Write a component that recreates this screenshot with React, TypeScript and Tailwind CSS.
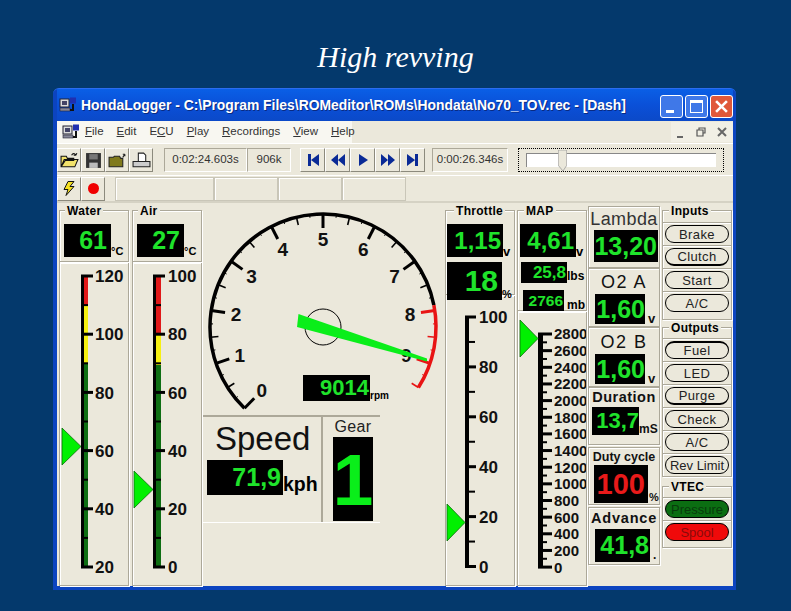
import React from "react";

const GREEN = "#1fe32b";
const etched = "border border-[#aca899] shadow-[1px_1px_0_#fff,inset_1px_1px_0_#fff]";

const Readout: React.FC<{ text: string; cls: string; color?: string }> = ({ text, cls, color = GREEN }) => (
  <div className={`flex items-center justify-end bg-black font-bold leading-none ${cls}`} style={{ color }}>
    {text}
  </div>
);

const Group: React.FC<{ label: string; cls: string; lx?: string; children: React.ReactNode }> = ({ label, cls, lx = "left-[6px]", children }) => (
  <div className={`relative ${etched} ${cls}`}>
    <span className={`absolute top-[-6px] ${lx} bg-[#ebe8db] px-[2px] text-[12px] leading-[13px] font-bold tracking-[0.3px]`}>{label}</span>
    {children}
  </div>
);

type Seg = { from: number; to: number; fill: string };

const Scale: React.FC<{
  box: string;
  cls: string;
  barX: number;
  barW: number;
  colorW?: number;
  y0: number;
  step: number;
  labels: string[];
  segs?: Seg[];
  ptr: number[];
  tick: number;
  minor: number;
  size: number;
  lx: number;
}> = ({ box, cls, barX, barW, colorW = 0, y0, step, labels, segs = [], ptr, tick, minor, size, lx }) => {
  const right = barX + barW;
  return (
    <svg viewBox={box} className={cls}>
      {segs.map((s) => (
        <rect key={s.from} x={right} y={s.from} width={colorW} height={s.to - s.from} fill={s.fill} />
      ))}
      <rect x={barX} y={y0 - 1.5} width={barW} height={step * (labels.length - 1) + 3} fill="#000" />
      {labels.map((l, i) => {
        const y = y0 + i * step;
        return (
          <g key={l}>
            <rect x={right} y={y - 1.5} width={tick} height={3} fill="#000" />
            {i < labels.length - 1 && <rect x={right} y={y + step / 2 - 1} width={minor} height={2} fill="#000" />}
            <text x={lx} y={y + size * 0.36} fontSize={size} fontWeight="bold" fill="#111">
              {l}
            </text>
          </g>
        );
      })}
      <polygon points={`${ptr[0]},${ptr[1]} ${ptr[0]},${ptr[1] + 37} ${barX},${ptr[1] + 18.5}`} fill="#00f000" stroke="#0a6a0a" strokeWidth="0.8" />
    </svg>
  );
};

const pt = (r: number, v: number) => {
  const a = ((-136 + 27.2 * v) * Math.PI) / 180;
  return [323 + r * Math.sin(a), 327 - r * Math.cos(a)];
};

const arc = (a: number, b: number) => {
  const [x1, y1] = pt(113, a);
  const [x2, y2] = pt(113, b);
  return `M${x1} ${y1} A113 113 0 ${(b - a) * 27.2 > 180 ? 1 : 0} 1 ${x2} ${y2}`;
};

const Tach: React.FC = () => {
  const ticks: number[] = [];
  for (let i = 0; i <= 38; i++) ticks.push(i / 4);
  return (
    <svg viewBox="203 203 240 212" className="w-[240px] h-[212px]">
      <path d={arc(0, 7.9)} fill="none" stroke="#000" strokeWidth="3.5" />
      <path d={arc(7.9, 9.5)} fill="none" stroke="#e81414" strokeWidth="3.5" />
      {ticks.map((v) => {
        const major = v % 1 === 0;
        const mid = v % 0.5 === 0;
        const len = major ? 14 : mid ? 8 : 3;
        const [x1, y1] = pt(113, v);
        const [x2, y2] = pt(113 - len, v);
        return (
          <line key={v} x1={x1} y1={y1} x2={x2} y2={y2} stroke={v >= 7.9 ? "#e81414" : "#000"} strokeWidth={major ? 3 : mid ? 1.6 : 1} />
        );
      })}
      {[0, 1, 2, 3, 4, 5, 6, 7, 8, 9].map((n) => {
        const [x, y] = pt(88, n);
        return (
          <text key={n} x={x} y={y + 7} textAnchor="middle" fontSize="19" fontWeight="bold" fill="#111">
            {n}
          </text>
        );
      })}
      <circle cx="323" cy="327" r="18" fill="none" stroke="#000" strokeWidth="1" />
      <polygon points="298.5,314 297,327 427,361.5 427,358.5" fill="#0aee1a" />
    </svg>
  );
};

const Raised: React.FC<{ cls?: string; children?: React.ReactNode }> = ({ cls = "w-[24px] h-[24px]", children }) => (
  <div className={`flex items-center justify-center shrink-0 border border-t-white border-l-white border-r-[#8c8a7d] border-b-[#8c8a7d] ${cls}`}>{children}</div>
);

const Sunken: React.FC<{ cls: string; text: string }> = ({ cls, text }) => (
  <div className={`flex items-center justify-center shrink-0 h-[24px] border border-t-[#aca899] border-l-[#aca899] border-r-white border-b-white text-[11.5px] text-[#333] ${cls}`}>{text}</div>
);

const Nav: React.FC<{ d: string }> = ({ d }) => (
  <Raised cls="w-[25px] h-[24px]">
    <svg viewBox="0 0 14 14" className="w-[14px] h-[14px]">
      <path d={d} fill="#0a2a96" />
    </svg>
  </Raised>
);

const Pill: React.FC<{ text: string; cls?: string; bar?: string; tight?: boolean }> = ({ text, cls = "border-black", bar = "", tight }) => (
  <div className="flex items-center justify-center h-[23px] border-t border-[#aca899] shadow-[inset_0_1px_0_#fff]">
    <div className={`flex items-center justify-center w-[64px] h-[18px] rounded-[9px] border text-[13px] leading-none text-[#222] ${tight ? "" : "tracking-[0.4px]"} ${cls} ${bar}`}>{text}</div>
  </div>
);

const AppIcon: React.FC<{ cls: string }> = ({ cls }) => (
  <svg viewBox="0 0 18 16" className={`shrink-0 ${cls}`}>
    <rect x="1" y="2" width="9" height="8" fill="#ddd" stroke="#223" />
    <rect x="3" y="4" width="5" height="4" fill="#446" />
    <rect x="11" y="0.5" width="6" height="6" fill="#1f2fb0" />
    <rect x="1" y="11" width="10" height="3" fill="#889" stroke="#223" strokeWidth="0.6" />
    <path d="M14 7v6h-3" fill="none" stroke="#111" strokeWidth="2" />
  </svg>
);

export default function App() {
  return (
    <div className="w-[791px] h-[611px] overflow-hidden bg-[#04396c] font-['Liberation_Sans',sans-serif] text-black">
      <div className="h-[88px] pt-[40px] text-center font-['Liberation_Serif',serif] italic text-[30px] leading-[34px] text-white">High revving</div>

      <div className="ml-[53px] w-[683px] h-[502px] rounded-t-[6px] bg-[#0c44c0] pl-[4px] pr-[3px] pb-[4px] border-t border-[#2c6cf0]">
        {/* title bar */}
        <div className="flex items-center h-[32px] bg-gradient-to-b from-[#0a5fe6] via-[#0a50d8] to-[#0b49c8]">
          <AppIcon cls="ml-[2px] w-[18px] h-[16px]" />
          <div className="ml-[4px] text-[13.9px] font-bold text-white whitespace-nowrap [text-shadow:1px_1px_0_#0a2a80]">
            {"HondaLogger - C:\\Program Files\\ROMeditor\\ROMs\\Hondata\\No70_TOV.rec - [Dash]"}
          </div>
          <div className="ml-auto flex gap-[2px] mt-[2px]">
            <div className="flex items-end w-[23px] h-[23px] rounded-[3px] border border-white bg-[#3f78e8] pl-[5px] pb-[4px]">
              <div className="w-[8px] h-[3px] bg-white" />
            </div>
            <div className="flex items-center justify-center w-[23px] h-[23px] rounded-[3px] border border-white bg-[#3f78e8]">
              <div className="w-[13px] h-[13px] border border-t-[3px] border-white" />
            </div>
            <div className="flex items-center justify-center w-[23px] h-[23px] rounded-[3px] border border-white bg-[#e0583a]">
              <svg viewBox="0 0 12 12" className="w-[13px] h-[13px]">
                <path d="M1 1l10 10M11 1L1 11" stroke="#fff" strokeWidth="2.4" />
              </svg>
            </div>
          </div>
        </div>

        {/* client */}
        <div className="bg-[#ebe8db] w-[676px] h-[465px]">
          <div className="flex items-center h-[22px]">
            <div className="flex items-center h-[22px] w-[295px] bg-[#f8f7f1] text-[11.5px] text-[#333]">
              <AppIcon cls="ml-[5px] w-[18px] h-[16px]" />
              <span className="ml-[5px]"><u>F</u>ile</span>
              <span className="ml-[13px]"><u>E</u>dit</span>
              <span className="ml-[13px]">E<u>C</u>U</span>
              <span className="ml-[13px]"><u>P</u>lay</span>
              <span className="ml-[13px]"><u>R</u>ecordings</span>
              <span className="ml-[13px]"><u>V</u>iew</span>
              <span className="ml-[13px]"><u>H</u>elp</span>
            </div>
            <div className="ml-auto flex items-center gap-[3px] pr-[2px] bg-[#f1efe5] h-[20px]">
              <div className="flex items-end justify-center w-[18px] h-[20px] pb-[4px]"><div className="w-[6px] h-[2px] bg-[#666]" /></div>
              <div className="flex items-center justify-center w-[18px] h-[20px]">
                <svg viewBox="0 0 10 10" className="w-[10px] h-[10px]">
                  <path d="M3 3V1h6v5H7M1 3h6v6H1z" fill="none" stroke="#555" strokeWidth="1.2" />
                </svg>
              </div>
              <div className="flex items-center justify-center w-[18px] h-[20px]">
                <svg viewBox="0 0 10 10" className="w-[10px] h-[10px]">
                  <path d="M1 1l8 8M9 1L1 9" stroke="#666" strokeWidth="2" />
                </svg>
              </div>
            </div>
          </div>

          <div className="flex items-center h-[32px] border-t border-white pt-[1px]">
            <div className="flex">
              <Raised>
                <svg viewBox="0 0 18 16" className="w-[19px] h-[17px]">
                  <path d="M1 14V4h5l1 2h6v2H5L1 14l3-7h13l-3 7z" fill="#f2e26a" stroke="#111" />
                  <path d="M11 3c1-2 3-2 4 0m0 0l1-2m-1 2l-2 0" fill="none" stroke="#111" />
                </svg>
              </Raised>
              <Raised>
                <svg viewBox="0 0 16 16" className="w-[17px] h-[17px]">
                  <path d="M1 1h14v14H1z" fill="#333" />
                  <path d="M4 2h8v5H4z" fill="#777" />
                  <path d="M4 10h8v5H4z" fill="#bbb" />
                </svg>
              </Raised>
              <Raised>
                <svg viewBox="0 0 18 16" className="w-[19px] h-[17px]">
                  <path d="M1 14V5h4l1-1h5l1 2h2v8z" fill="#807a1c" stroke="#222" />
                  <path d="M14 5l2-3m0 0h-2m2 0v2" fill="none" stroke="#222" />
                </svg>
              </Raised>
              <Raised>
                <svg viewBox="0 0 18 16" className="w-[19px] h-[17px]">
                  <path d="M6 1h5l2 2v6H6z" fill="#fff" stroke="#222" />
                  <path d="M1 9h16v5H1z" fill="#ccc" stroke="#222" />
                </svg>
              </Raised>
            </div>
            <div className="flex ml-[11px]">
              <Sunken cls="w-[83px]" text="0:02:24.603s" />
              <Sunken cls="w-[44px]" text="906k" />
            </div>
            <div className="flex ml-[9px]">
              <Nav d="M2 1h3v12H2zM13 1v12L5 7z" />
              <Nav d="M7 1v12L0 7zM14 1v12L7 7z" />
              <Nav d="M3 1v12l9-6z" />
              <Nav d="M0 1v12l7-6zM7 1v12l7-6z" />
              <Nav d="M1 1v12l8-6zM9 1h3v12H9z" />
            </div>
            <Sunken cls="w-[76px] ml-[7px]" text="0:00:26.346s" />
            <div className="relative ml-[10px] w-[206px] h-[24px] border border-dotted border-black flex items-center pl-[7px]">
              <div className="w-[190px] h-[14px] bg-white border-t border-l border-[#888]" />
              <svg viewBox="0 0 9 22" className="absolute left-[39px] top-[1px] w-[9px] h-[21px]">
                <path d="M0 0h9v16l-4 6-5-6z" fill="#ebe8db" stroke="#999" strokeWidth="0.8" />
              </svg>
            </div>
          </div>

          <div className="flex items-center h-[28px] border-t border-white border-b-2 border-b-[#d5d2c4]">
            <Raised>
              <svg viewBox="0 0 14 16" className="w-[14px] h-[17px]">
                <path d="M6 1h6L8 6h4l-8 9 2-6H2z" fill="#f5e020" stroke="#111" />
              </svg>
            </Raised>
            <Raised><div className="w-[11px] h-[11px] rounded-full bg-[#f00000]" /></Raised>
            <div className="flex ml-[10px]">
              {[99, 64, 64, 64].map((w, i) => (
                <div key={i} style={{ width: w }} className="h-[24px] border border-[#c9c6b8] shadow-[inset_1px_1px_0_#fff]" />
              ))}
            </div>
          </div>

          {/* dash */}
          <div className="flex h-[383px]">
            {/* water */}
            <div className="ml-[2px] mt-[7px] w-[70px]">
              <Group label="Water" cls="h-[52px] flex items-end pb-[4px] pl-[4px]" lx="left-[5px]">
                <Readout text="61" cls="w-[47px] h-[33px] text-[25px] pr-[4px]" />
                <span className="text-[11px] leading-[11px] font-bold">°C</span>
              </Group>
              <div className={`h-[324px] ${etched}`}>
                <Scale box="60 263 68 322" cls="w-[68px] h-[322px]" barX={81} barW={3} colorW={4} y0={276} step={58.2} labels={["120", "100", "80", "60", "40", "20"]} segs={[{ from: 276, to: 306, fill: "#e01818" }, { from: 306, to: 364, fill: "#f6f010" }, { from: 364, to: 568, fill: "#0e6e12" }]} ptr={[62, 428]} tick={9} minor={4} size={17} lx={95} />
              </div>
            </div>
            {/* air */}
            <div className="ml-[3px] mt-[7px] w-[70px]">
              <Group label="Air" cls="h-[52px] flex items-end pb-[4px] pl-[4px]" lx="left-[5px]">
                <Readout text="27" cls="w-[47px] h-[33px] text-[25px] pr-[4px]" />
                <span className="text-[11px] leading-[11px] font-bold">°C</span>
              </Group>
              <div className={`h-[324px] ${etched}`}>
                <Scale box="133 263 68 322" cls="w-[68px] h-[322px]" barX={153} barW={3} colorW={5} y0={276} step={58.2} labels={["100", "80", "60", "40", "20", "0"]} segs={[{ from: 276, to: 335, fill: "#e01818" }, { from: 335, to: 365, fill: "#f6f010" }, { from: 365, to: 568, fill: "#0e6e12" }]} ptr={[134, 471]} tick={9} minor={5} size={17} lx={168} />
              </div>
            </div>
            {/* tach + speed */}
            <div className="w-[240px] ml-[1px]">
              <div className="relative h-[212px]">
                <Tach />
                <div className="absolute left-[100px] top-[172px] flex items-end">
                  <Readout text="9014" cls="w-[67px] h-[26px] text-[22px] pr-[1px]" />
                  <span className="text-[10px] leading-[10px] font-bold">rpm</span>
                </div>
              </div>
              <div className="flex w-[177px] h-[108px] border-t-2 border-[#aca899] border-b border-b-white">
                <div className="w-[120px] border-r-2 border-[#aca899] pl-[4px]">
                  <div className="text-[33px] leading-[38px] pl-[8px] mt-[3px] text-[#111]">Speed</div>
                  <div className="flex items-end mt-[2px]">
                    <Readout text="71,9" cls="w-[76px] h-[35px] text-[25px] pr-[2px]" />
                    <span className="text-[19.5px] leading-[22px] font-bold">kph</span>
                  </div>
                </div>
                <div className="flex-1 flex flex-col items-center pl-[3px]">
                  <div className="text-[16px] leading-[20px] text-[#222] tracking-[0.3px]">Gear</div>
                  <Readout text="1" color="#0aee1a" cls="w-[40px] h-[84px] text-[73px] !justify-center" />
                </div>
              </div>
            </div>
            {/* throttle */}
            <div className="ml-[2px] mt-[7px] w-[70px]">
              <Group label="Throttle" cls="h-[85px]" lx="left-[8px]">
                <div className="flex items-end pl-[1px] mt-[13px]">
                  <Readout text="1,15" cls="w-[56px] h-[33px] text-[24px] pr-[2px]" />
                  <span className="text-[13px] leading-[11px] font-bold">v</span>
                </div>
                <div className="flex items-end pl-[1px] mt-[5px]">
                  <Readout text="18" cls="w-[55px] h-[38px] text-[30px] pr-[4px]" />
                  <span className="text-[11px] leading-[11px] font-bold">%</span>
                </div>
              </Group>
              <div className={`h-[291px] ${etched}`}>
                <Scale box="446 296 68 289" cls="w-[68px] h-[289px]" barX={465} barW={4} y0={317} step={49.9} labels={["100", "80", "60", "40", "20", "0"]} ptr={[447, 504]} tick={7} minor={6} size={17} lx={479} />
              </div>
            </div>
            {/* map */}
            <div className="ml-[2px] mt-[7px] w-[70px]">
              <Group label="MAP" cls="h-[101px]" lx="left-[6px]">
                <div className="flex items-end pl-[2px] mt-[13px]">
                  <Readout text="4,61" cls="w-[56px] h-[33px] text-[24px] pr-[2px]" />
                  <span className="text-[13px] leading-[11px] font-bold">v</span>
                </div>
                <div className="flex items-end pl-[3px] mt-[5px]">
                  <Readout text="25,8" cls="w-[46px] h-[21px] text-[17px] pr-[1px]" />
                  <span className="text-[12px] leading-[13px] font-bold">lbs</span>
                </div>
                <div className="flex items-end pl-[5px] mt-[7px]">
                  <Readout text="2766" cls="w-[41px] h-[21px] text-[15.5px] pr-[1px]" />
                  <span className="ml-[3px] text-[12px] leading-[12px] font-bold">mb</span>
                </div>
              </Group>
              <div className={`h-[275px] ${etched}`}>
                <Scale box="518 312 68 273" cls="w-[68px] h-[273px]" barX={538} barW={5} y0={334} step={16.65} labels={["2800", "2600", "2400", "2200", "2000", "1800", "1600", "1400", "1200", "1000", "800", "600", "400", "200", "0"]} ptr={[520, 320]} tick={9} minor={4} size={15} lx={554} />
              </div>
            </div>
            {/* lambda etc */}
            <div className="w-[72px] ml-[1px] mt-[3px] text-center text-[#111]">
              <div className={`h-[62px] ${etched}`}>
                <div className="text-[18px] leading-[22px] text-[#333] tracking-[0.4px] mt-[1px]">Lambda</div>
                <Readout text="13,20" cls="ml-[5px] w-[64px] h-[32px] text-[25px] pr-[1px]" />
              </div>
              <div className={`h-[59px] ${etched}`}>
                <div className="text-[18px] leading-[24px] tracking-[1.5px] mt-[1px]">O2 A</div>
                <div className="flex items-end pl-[6px]">
                  <Readout text="1,60" cls="w-[50px] h-[30px] text-[25px]" />
                  <span className="ml-[3px] text-[13px] leading-[11px] font-bold">v</span>
                </div>
              </div>
              <div className={`h-[60px] ${etched}`}>
                <div className="text-[18px] leading-[24px] tracking-[1.5px] mt-[2px]">O2 B</div>
                <div className="flex items-end pl-[6px]">
                  <Readout text="1,60" cls="w-[50px] h-[30px] text-[25px]" />
                  <span className="ml-[3px] text-[13px] leading-[11px] font-bold">v</span>
                </div>
              </div>
              <div className={`h-[58px] ${etched}`}>
                <div className="text-[14.5px] leading-[19px] font-semibold tracking-[0.5px]">Duration</div>
                <div className="flex items-end pl-[3px]">
                  <Readout text="13,7" cls="w-[47px] h-[28px] text-[22px]" />
                  <span className="text-[12px] leading-[12px] font-bold">mS</span>
                </div>
              </div>
              <div className={`h-[58px] mt-[2px] ${etched}`}>
                <div className="text-[12.5px] leading-[16px] font-bold mt-[1px]">Duty cycle</div>
                <div className="flex items-end pl-[5px]">
                  <Readout text="100" color="#e81a1a" cls="w-[54px] h-[38px] text-[29px] pr-[3px]" />
                  <span className="ml-[1px] text-[11px] leading-[11px] font-bold">%</span>
                </div>
              </div>
              <div className={`h-[58px] mt-[2px] ${etched}`}>
                <div className="text-[14.5px] leading-[19px] font-semibold tracking-[0.8px] mt-[1px]">Advance</div>
                <div className="flex items-end pl-[6px] mt-[1px]">
                  <Readout text="41,8" cls="w-[55px] h-[33px] text-[25px] pr-[1px]" />
                  <span className="ml-[3px] text-[12px] leading-[14px] font-bold">.</span>
                </div>
              </div>
            </div>
            {/* inputs / outputs */}
            <div className="w-[70px] ml-[2px] mt-[7px]">
              <Group label="Inputs" cls="h-[110px] pt-[11px]" lx="left-[6px]">
                <Pill text="Brake" />
                <Pill text="Clutch" bar="border-b-2" />
                <Pill text="Start" />
                <Pill text="A/C" />
              </Group>
              <Group label="Outputs" cls="h-[150px] mt-[7px] pt-[10px]" lx="left-[6px]">
                <Pill text="Fuel" bar="border-t-2" />
                <Pill text="LED" />
                <Pill text="Purge" bar="border-b-2" />
                <Pill text="Check" />
                <Pill text="A/C" />
                <Pill text="Rev Limit" tight />
              </Group>
              <Group label="VTEC" cls="h-[62px] mt-[9px] pt-[10px]" lx="left-[6px]">
                <Pill text="Pressure" tight cls="border-black bg-[#0b6e12] !text-[#083c0c]" />
                <Pill text="Spool" tight cls="border-black bg-[#f00a0a] !text-[#8a0a0a]" />
              </Group>
            </div>
          </div>
        </div>
      </div>
    </div>
  );
}
